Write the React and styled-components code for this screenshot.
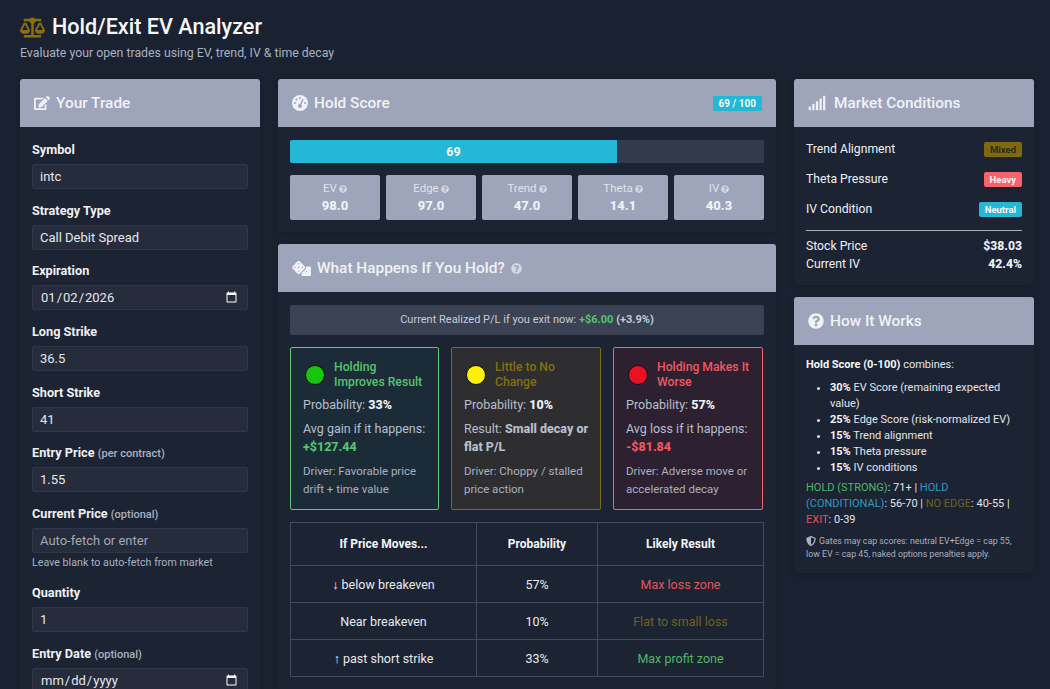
// App.jsx
import React from 'react'
import styled, { createGlobalStyle } from 'styled-components'
import {
  FaBalanceScale,
  FaEdit,
  FaDice,
  FaSignal,
  FaQuestionCircle,
  FaShieldAlt,
} from 'react-icons/fa'
import { FaGaugeHigh } from 'react-icons/fa6'

const GlobalStyle = createGlobalStyle`
  html, body {
    margin: 0;
    padding: 0;
    background: #1a2130;
    color: #f0f2f6;
    font-family: Roboto, "Noto Sans", sans-serif;
    overflow: hidden;
  }
  * { box-sizing: border-box; }
`

const Page = styled.div`
  padding: 14px 16px 0 20px;
  height: 689px;
  overflow: hidden;
`

const Title = styled.h1`
  display: flex;
  align-items: center;
  gap: 7px;
  margin: 0;
  height: 26px;
  font-size: 21.6px;
  font-weight: 500;
  line-height: 26px;
  color: #f5f7fa;
  svg { color: #8a6f0c; font-size: 25px; }
`

const Subtitle = styled.p`
  margin: 4px 0 0;
  height: 18px;
  font-size: 12.3px;
  line-height: 18px;
  color: #a9b2c2;
`

const Columns = styled.div`
  display: grid;
  grid-template-columns: 240px 498px 240px;
  gap: 18px;
  margin-top: 17px;
  align-items: start;
`

const Stack = styled.div`
  display: flex;
  flex-direction: column;
  gap: 12px;
`

const Card = styled.section`
  background: #1c2332;
  border-radius: 3px;
  box-shadow: 0 1px 6px rgba(0, 0, 0, 0.18);
  overflow: hidden;
`

const CardHeader = styled.header`
  display: flex;
  align-items: center;
  height: 48px;
  padding: 0 14px;
  background: #9ea5ba;
  color: #f0f2f7;
  font-size: 15.4px;
  font-weight: 500;
  gap: ${(p) => p.$gap || 6}px;
  svg { font-size: ${(p) => p.$icon || 16}px; flex: none; }
`

const CardBody = styled.div`
  padding: 13px 12px 12px;
`

const HeaderBadge = styled.span`
  margin-left: auto;
  padding: 0 6px;
  height: 15px;
  line-height: 15px;
  background: #25b8d6;
  border-radius: 1px;
  font-size: 10px;
  font-weight: 700;
  color: #f5f7fa;
`

const HelpDot = styled(FaQuestionCircle)`
  font-size: ${(p) => p.$size || 8}px !important;
  color: #d4d8e2;
  vertical-align: -1px;
`

/* form column */
const Field = styled.div`
  height: ${(p) => (p.$tall ? '79px' : '60.7px')};
`

const FieldHint = styled.div`
  margin-top: 3px;
  font-size: 10.7px;
  line-height: 14px;
  color: #a9b2c2;
`

const Label = styled.label`
  display: block;
  height: 15px;
  margin-bottom: 7px;
  font-size: 12.7px;
  line-height: 15px;
  font-weight: 700;
  color: #eef0f5;
  small { font-size: 11px; font-weight: 500; color: #a9b2c2; }
`

const inputStyles = `
  display: block;
  width: 100%;
  height: 25px;
  padding: 0 7px;
  background: #262c3c;
  border: 1px solid #2f3647;
  border-radius: 2px;
  color: #e4e7ee;
  font-family: Roboto, "Noto Sans", sans-serif;
  font-size: 13px;
  color-scheme: dark;
  outline: none;
  &::placeholder { color: #a2a8b4; opacity: 1; }
`

const Input = styled.input`
  ${inputStyles}
`

const Select = styled.select`
  ${inputStyles}
  appearance: none;
`

const TradeBody = styled(CardBody)`
  padding: 15px 12px 0;
`

/* hold score */
const Track = styled.div`
  height: 23px;
  background: #333a4b;
  border-radius: 2px;
  overflow: hidden;
`

const Fill = styled.div`
  height: 100%;
  background: #25b8d6;
  color: #f5f7fa;
  font-size: 12.5px;
  font-weight: 700;
  line-height: 23px;
  text-align: center;
`

const Tiles = styled.div`
  display: grid;
  grid-template-columns: repeat(5, 1fr);
  gap: 6px;
  margin-top: 12px;
`

const Tile = styled.div`
  height: 45px;
  padding-top: 6px;
  background: #9ea5ba;
  border-radius: 2px;
  text-align: center;
`

const TileLabel = styled.div`
  display: flex;
  align-items: center;
  justify-content: center;
  gap: 2px;
  height: 15px;
  font-size: 11.5px;
  line-height: 15px;
  color: #e0e3ea;
`

const TileValue = styled.div`
  margin-top: 2px;
  font-size: 13px;
  font-weight: 800;
  line-height: 15px;
  color: #f0f2f7;
`

/* what happens */
const PnlBar = styled.div`
  height: 30px;
  background: #3b4253;
  border-radius: 2px;
  font-size: 11px;
  line-height: 30px;
  text-align: center;
  color: #c6cbd6;
  b { font-weight: 700; }
`

const Green = styled.b`
  color: #56c271;
`

const Outcomes = styled.div`
  display: grid;
  grid-template-columns: 149px 150px 150px;
  gap: 12px;
  margin-top: 12px;
`

const toneColors = {
  good: { border: '#5cc87a', bg: '#1b2c38', text: '#56c271', dot: '#16c60c' },
  flat: { border: '#7d6a12', bg: '#2e2e30', text: '#83700f', dot: '#fff100' },
  bad: { border: '#f0646c', bg: '#2c2031', text: '#f0585f', dot: '#e81224' },
}

const Outcome = styled.div`
  height: 163px;
  padding: 12px 8px 12px 12px;
  border: 1px solid ${(p) => toneColors[p.$tone].border};
  border-radius: 2px;
  background: ${(p) => toneColors[p.$tone].bg};
  font-size: 12.5px;
  line-height: 18px;
  color: #b9bfcc;
`

const OutcomeHead = styled.div`
  display: flex;
  align-items: center;
  gap: 9px;
  min-height: 30px;
  margin: 0 -2px 6px 2px;
  font-size: 12.2px;
  font-weight: 500;
  line-height: 15px;
  color: ${(p) => toneColors[p.$tone].text};
`

const Dot = styled.span`
  flex: none;
  width: 20px;
  height: 20px;
  border-radius: 50%;
  border: 1px solid #111;
  background: ${(p) => toneColors[p.$tone].dot};
`

const OutcomeLine = styled.div`
  margin-bottom: 6px;
  b { font-weight: 800; color: ${(p) => p.$strong || '#f2f4f8'}; }
`

const Amount = styled.b`
  display: block;
  color: ${(p) => toneColors[p.$tone].text} !important;
`

const Driver = styled.div`
  margin-top: 4px;
  padding-right: 4px;
  font-size: 11.5px;
  color: #a9b0bf;
`

const Table = styled.table`
  width: 474px;
  margin-top: 12px;
  border-collapse: collapse;
  table-layout: fixed;
  font-size: 12.5px;
  text-align: center;
  color: #e7e9ef;
  td { border: 1px solid #434a5b; padding: 0; height: 37px; }
`

const HeadCell = styled.th`
  width: ${(p) => p.$width || 'auto'};
  height: 43px;
  padding: 0;
  border: 1px solid #434a5b;
  font-weight: 700;
  font-size: 12px;
  color: #f2f4f8;
`

const ResultCell = styled.td`
  color: ${(p) => p.$color};
`

/* market conditions */
const MarketRow = styled.div`
  display: flex;
  align-items: center;
  justify-content: space-between;
  height: 30px;
  font-size: 12.2px;
  color: #eef0f5;
`

const Pill = styled.span`
  height: 15px;
  padding: 0 6px;
  border-radius: 2px;
  background: ${(p) => p.$bg};
  color: ${(p) => p.$fg};
  font-size: 9.5px;
  font-weight: 700;
  line-height: 15px;
`

const MarketBody = styled(CardBody)`
  padding: 7px 12px 12px;
`

const Rule = styled.hr`
  margin: 6px 0 6px;
  border: 0;
  border-top: 1px solid #a9aebb;
`

const StatRow = styled.div`
  display: flex;
  justify-content: space-between;
  height: 18px;
  font-size: 12.2px;
  line-height: 18px;
  color: #eef0f5;
  b { font-weight: 800; }
`

/* how it works */
const HowBody = styled(CardBody)`
  padding: 12px 12px 12px;
  font-size: 11px;
  line-height: 16px;
  color: #e2e5ec;
  b { font-weight: 700; color: #f5f7fa; }
`

const HowList = styled.ul`
  margin: 7px 0 4px;
  padding-left: 24px;
`

const Status = styled.span`
  color: ${(p) => p.$color};
`

const Note = styled.div`
  margin-top: 7px;
  font-size: 8.8px;
  line-height: 13px;
  color: #a9b0bf;
  svg { font-size: 10px; vertical-align: -2px; margin-right: 3px; }
`

const fields = [
  { label: 'Symbol', value: 'intc' },
  { label: 'Strategy Type', select: 'Call Debit Spread' },
  { label: 'Expiration', type: 'date', value: '2026-01-02' },
  { label: 'Long Strike', value: '36.5' },
  { label: 'Short Strike', value: '41' },
  { label: 'Entry Price', note: '(per contract)', value: '1.55' },
  {
    label: 'Current Price',
    note: '(optional)',
    placeholder: 'Auto-fetch or enter',
    hint: 'Leave blank to auto-fetch from market',
  },
  { label: 'Quantity', value: '1' },
  { label: 'Entry Date', note: '(optional)', type: 'date' },
]

const scores = [
  { name: 'EV', value: '98.0' },
  { name: 'Edge', value: '97.0' },
  { name: 'Trend', value: '47.0' },
  { name: 'Theta', value: '14.1' },
  { name: 'IV', value: '40.3' },
]

const rows = [
  { move: '↓ below breakeven', prob: '57%', result: 'Max loss zone', color: '#e2545c' },
  { move: 'Near breakeven', prob: '10%', result: 'Flat to small loss', color: '#6f6220' },
  { move: '↑ past short strike', prob: '33%', result: 'Max profit zone', color: '#4fb868' },
]

const weights = [
  ['30%', 'EV Score (remaining expected value)'],
  ['25%', 'Edge Score (risk-normalized EV)'],
  ['15%', 'Trend alignment'],
  ['15%', 'Theta pressure'],
  ['15%', 'IV conditions'],
]

const holdScore = 69

const App = () => {
  return (
    <Page>
      <GlobalStyle />
      <Title>
        <FaBalanceScale />
        Hold/Exit EV Analyzer
      </Title>
      <Subtitle>Evaluate your open trades using EV, trend, IV &amp; time decay</Subtitle>

      <Columns>
        {/* Form */}
        <Card>
          <CardHeader>
            <FaEdit />
            Your Trade
          </CardHeader>
          <TradeBody>
            {fields.map((f) => (
              <Field key={f.label} $tall={!!f.hint}>
                <Label>
                  {f.label} {f.note && <small>{f.note}</small>}
                </Label>
                {f.select ? (
                  <Select defaultValue={f.select}>
                    <option>{f.select}</option>
                  </Select>
                ) : (
                  <Input
                    type={f.type || 'text'}
                    defaultValue={f.value}
                    placeholder={f.placeholder}
                  />
                )}
                {f.hint && <FieldHint>{f.hint}</FieldHint>}
              </Field>
            ))}
          </TradeBody>
        </Card>

        {/* Middle */}
        <Stack>
          <Card>
            <CardHeader>
              <FaGaugeHigh />
              Hold Score
              <HeaderBadge>{holdScore} / 100</HeaderBadge>
            </CardHeader>
            <CardBody>
              <Track>
                <Fill style={{ width: `${holdScore}%` }}>{holdScore}</Fill>
              </Track>
              <Tiles>
                {scores.map((s) => (
                  <Tile key={s.name}>
                    <TileLabel>
                      {s.name} <HelpDot />
                    </TileLabel>
                    <TileValue>{s.value}</TileValue>
                  </Tile>
                ))}
              </Tiles>
            </CardBody>
          </Card>

          <Card>
            <CardHeader $icon={19}>
              <FaDice />
              What Happens If You Hold?
              <HelpDot $size={11} />
            </CardHeader>
            <CardBody>
              <PnlBar>
                Current Realized P/L if you exit now: <Green>+$6.00</Green> <b>(+3.9%)</b>
              </PnlBar>

              <Outcomes>
                <Outcome $tone="good">
                  <OutcomeHead $tone="good">
                    <Dot $tone="good" />
                    <span>
                      Holding
                      <br />
                      Improves Result
                    </span>
                  </OutcomeHead>
                  <OutcomeLine>
                    Probability: <b>33%</b>
                  </OutcomeLine>
                  <OutcomeLine>
                    Avg gain if it happens:
                    <Amount $tone="good">+$127.44</Amount>
                  </OutcomeLine>
                  <Driver>Driver: Favorable price drift + time value</Driver>
                </Outcome>

                <Outcome $tone="flat">
                  <OutcomeHead $tone="flat">
                    <Dot $tone="flat" />
                    <span>Little to No Change</span>
                  </OutcomeHead>
                  <OutcomeLine>
                    Probability: <b>10%</b>
                  </OutcomeLine>
                  <OutcomeLine $strong="#b9bfcc">
                    Result: <b>Small decay or flat P/L</b>
                  </OutcomeLine>
                  <Driver>Driver: Choppy / stalled price action</Driver>
                </Outcome>

                <Outcome $tone="bad">
                  <OutcomeHead $tone="bad">
                    <Dot $tone="bad" />
                    <span>Holding Makes It Worse</span>
                  </OutcomeHead>
                  <OutcomeLine>
                    Probability: <b>57%</b>
                  </OutcomeLine>
                  <OutcomeLine>
                    Avg loss if it happens:
                    <Amount $tone="bad">-$81.84</Amount>
                  </OutcomeLine>
                  <Driver>Driver: Adverse move or accelerated decay</Driver>
                </Outcome>
              </Outcomes>

              <Table>
                <thead>
                  <tr>
                    <HeadCell $width="186px">If Price Moves...</HeadCell>
                    <HeadCell $width="121px">Probability</HeadCell>
                    <HeadCell>Likely Result</HeadCell>
                  </tr>
                </thead>
                <tbody>
                  {rows.map((r) => (
                    <tr key={r.move}>
                      <td>{r.move}</td>
                      <td>{r.prob}</td>
                      <ResultCell $color={r.color}>{r.result}</ResultCell>
                    </tr>
                  ))}
                </tbody>
              </Table>
            </CardBody>
          </Card>
        </Stack>

        {/* Right */}
        <Stack>
          <Card>
            <CardHeader $icon={18} $gap={8}>
              <FaSignal />
              Market Conditions
            </CardHeader>
            <MarketBody>
              <MarketRow>
                Trend Alignment
                <Pill $bg="#7d6a0c" $fg="#2d2a1a">Mixed</Pill>
              </MarketRow>
              <MarketRow>
                Theta Pressure
                <Pill $bg="#f4646a" $fg="#f8f0f0">Heavy</Pill>
              </MarketRow>
              <MarketRow>
                IV Condition
                <Pill $bg="#25b8d6" $fg="#f5f7fa">Neutral</Pill>
              </MarketRow>
              <Rule />
              <StatRow>
                Stock Price <b>$38.03</b>
              </StatRow>
              <StatRow>
                Current IV <b>42.4%</b>
              </StatRow>
            </MarketBody>
          </Card>

          <Card>
            <CardHeader>
              <FaQuestionCircle />
              How It Works
            </CardHeader>
            <HowBody>
              <b>Hold Score (0-100)</b> combines:
              <HowList>
                {weights.map(([pct, text]) => (
                  <li key={text}>
                    <b>{pct}</b> {text}
                  </li>
                ))}
              </HowList>
              <Status $color="#4fb868">HOLD (STRONG)</Status>: 71+ |{' '}
              <Status $color="#2a9cc4">HOLD (CONDITIONAL)</Status>: 56-70 |{' '}
              <Status $color="#6f6220">NO EDGE</Status>: 40-55 |{' '}
              <Status $color="#e2545c">EXIT</Status>: 0-39
              <Note>
                <FaShieldAlt />
                Gates may cap scores: neutral EV+Edge = cap 55, low EV = cap 45, naked options penalties apply.
              </Note>
            </HowBody>
          </Card>
        </Stack>
      </Columns>
    </Page>
  )
}

export default App
